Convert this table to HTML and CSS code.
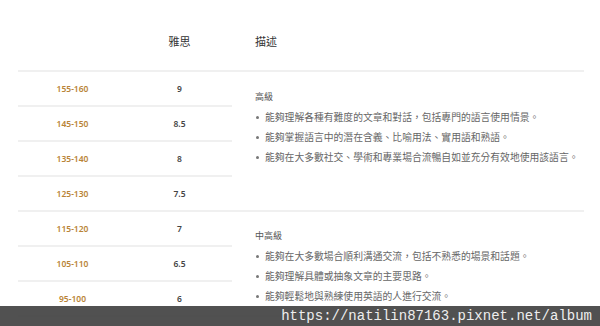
FILE: index.html
```html
<!DOCTYPE html>
<html lang="zh-Hant">
<head>
<meta charset="utf-8">
<link rel="stylesheet" href="styles.css">
</head>
<body>
<div class="table">
  <div class="hd"></div>
  <div class="hd center">雅思</div>
  <div class="hd desc-hd">描述</div>

  <div class="cell score">155-160</div>
  <div class="cell ielts">9</div>
  <div class="desc g1">
    <div class="level">高級</div>
    <ul>
      <li>能夠理解各種有難度的文章和對話，包括專門的語言使用情景。</li>
      <li>能夠掌握語言中的潛在含義、比喻用法、實用語和熟語。</li>
      <li>能夠在大多數社交、學術和專業場合流暢自如並充分有效地使用該語言。</li>
    </ul>
  </div>
  <div class="cell score">145-150</div>
  <div class="cell ielts">8.5</div>
  <div class="cell score">135-140</div>
  <div class="cell ielts">8</div>
  <div class="cell score">125-130</div>
  <div class="cell ielts">7.5</div>

  <div class="cell score">115-120</div>
  <div class="cell ielts">7</div>
  <div class="desc g2">
    <div class="level">中高級</div>
    <ul>
      <li>能夠在大多數場合順利溝通交流，包括不熟悉的場景和話題。</li>
      <li>能夠理解具體或抽象文章的主要思路。</li>
      <li>能夠輕鬆地與熟練使用英語的人進行交流。</li>
    </ul>
  </div>
  <div class="cell score">105-110</div>
  <div class="cell ielts">6.5</div>
  <div class="cell score">95-100</div>
  <div class="cell ielts">6</div>
</div>
<div class="watermark">https://natilin87163.pixnet.net/album</div>
</body>
</html>
```

FILE: styles.css
```css
html, body {
  margin: 0;
  padding: 0;
  background: #fff;
  overflow: hidden;
}
body {
  width: 600px;
  height: 326px;
  position: relative;
  font-family: "Noto Sans", "Noto Sans CJK TC", sans-serif;
}
.table {
  margin-left: 18px;
  width: 566px;
  display: grid;
  grid-template-columns: 109px 105px 1fr;
  grid-template-rows: 72px repeat(7, 35px);
}
.hd {
  box-sizing: border-box;
  border-bottom: 2px solid #f0f0f0;
  padding-top: 33px;
  line-height: 16px;
  font-family: "Noto Sans CJK TC", sans-serif;
  font-size: 11px;
  color: #333;
}
.center { text-align: center; }
.desc-hd { padding-left: 23px; }
.cell {
  box-sizing: border-box;
  border-bottom: 2px solid #f0f0f0;
  display: flex;
  align-items: center;
  justify-content: center;
  font-size: 8.5px;
  font-weight: 600;
}
.score { color: #b98437; }
.ielts { color: #444; }
.desc {
  grid-column: 3;
  box-sizing: border-box;
  border-bottom: 2px solid #f0f0f0;
  padding: 15px 0 0 23px;
  font-family: "Noto Sans CJK TC", sans-serif;
  color: #666;
}
.g1 { grid-row: 2 / span 4; }
.g2 { grid-row: 6 / span 3; padding-top: 14px; }
.level {
  font-size: 9px;
  line-height: 20px;
  color: #555;
}
.desc ul {
  list-style: none;
  margin: 0;
  padding: 0;
}
.desc li {
  font-size: 9.8px;
  line-height: 20px;
  display: flex;
  align-items: center;
  white-space: nowrap;
}
.desc li::before {
  content: "";
  width: 3px;
  height: 3px;
  border-radius: 50%;
  background: #777;
  margin: 0 6px 0 1px;
  flex: none;
}
.watermark {
  position: absolute;
  left: 0;
  right: 0;
  bottom: 0;
  height: 20px;
  background: rgba(66, 66, 66, 0.92);
  color: #eee;
  font-family: "Liberation Mono", monospace;
  font-size: 14px;
  line-height: 20px;
  text-align: right;
  padding-right: 8px;
}
```
